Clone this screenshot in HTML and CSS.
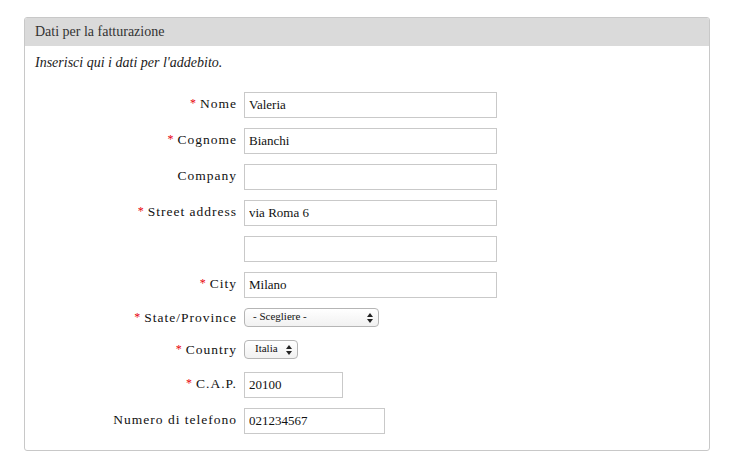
FILE: index.html
```html
<!DOCTYPE html>
<html lang="it">
<head>
<meta charset="utf-8">
<title>Dati per la fatturazione</title>
<link rel="stylesheet" href="styles.css">
</head>
<body>
<div class="panel">
  <div class="panel-head">Dati per la fatturazione</div>
  <div class="panel-body">
    <p class="intro">Inserisci qui i dati per l'addebito.</p>
    <form class="form">
      <label class="lbl"><span class="req">*</span> Nome</label>
      <div class="field"><input class="txt" type="text" value="Valeria"></div>

      <label class="lbl"><span class="req">*</span> Cognome</label>
      <div class="field"><input class="txt" type="text" value="Bianchi"></div>

      <label class="lbl">Company</label>
      <div class="field"><input class="txt" type="text" value=""></div>

      <label class="lbl"><span class="req">*</span> Street address</label>
      <div class="field"><input class="txt" type="text" value="via Roma 6"></div>

      <label class="lbl"></label>
      <div class="field"><input class="txt" type="text" value=""></div>

      <label class="lbl"><span class="req">*</span> City</label>
      <div class="field"><input class="txt" type="text" value="Milano"></div>

      <label class="lbl lbl-sel"><span class="req">*</span> State/Province</label>
      <div class="field field-sel">
        <div class="sel sel-wide">
          <span class="sel-text">- Scegliere -</span>
          <svg class="arrows" width="6" height="10" viewBox="0 0 6 10"><path d="M3 0L6 4H0Z M3 10L0 6H6Z" fill="#222"/></svg>
        </div>
      </div>

      <label class="lbl lbl-sel"><span class="req">*</span> Country</label>
      <div class="field field-sel">
        <div class="sel sel-narrow">
          <span class="sel-text">Italia</span>
          <svg class="arrows" width="6" height="10" viewBox="0 0 6 10"><path d="M3 0L6 4H0Z M3 10L0 6H6Z" fill="#222"/></svg>
        </div>
      </div>

      <label class="lbl"><span class="req">*</span> C.A.P.</label>
      <div class="field"><input class="txt txt-cap" type="text" value="20100"></div>

      <label class="lbl">Numero di telefono</label>
      <div class="field"><input class="txt txt-tel" type="text" value="021234567"></div>
    </form>
  </div>
</div>
</body>
</html>
```

FILE: styles.css
```css
html, body {
  margin: 0;
  padding: 0;
  background: #ffffff;
}
body {
  font-family: "Liberation Serif", "DejaVu Serif", serif;
  color: #222;
  padding: 17px 31px 0 24px;
}
.panel {
  width: 684px;
  height: 432px;
  border: 1px solid #c8c8c8;
  border-radius: 3px;
  overflow: hidden;
}
.panel-head {
  background: #dadada;
  height: 28px;
  line-height: 28px;
  padding-left: 10px;
  font-size: 14px;
  color: #333;
}
.intro {
  margin: 0;
  padding: 9px 0 0 10px;
  height: 21px;
  line-height: 16px;
  font-style: italic;
  font-size: 14px;
  color: #1a1a1a;
}
.form {
  display: grid;
  grid-template-columns: 212px 1fr;
  column-gap: 7px;
  row-gap: 10px;
  margin-top: 16px;
}
.lbl {
  display: flex;
  align-items: center;
  justify-content: flex-end;
  font-size: 13.5px;
  letter-spacing: 1px;
  color: #111;
  height: 26px;
  box-sizing: border-box;
  padding-bottom: 3px;
}
.lbl-sel {
  height: 22px;
  align-items: flex-start;
  padding-top: 2px;
  padding-bottom: 0;
}
.req {
  color: #e8000b;
  margin-right: 3px;
  font-size: 12px;
}
.field {
  display: flex;
  align-items: flex-start;
}
.field-sel {
  height: 22px;
}
.txt {
  box-sizing: border-box;
  width: 253px;
  height: 26px;
  border: 1px solid #c9c9c9;
  padding: 0 4px;
  margin: 0;
  font-family: "Liberation Serif", "DejaVu Serif", serif;
  font-size: 13px;
  color: #111;
  background: #fff;
  outline: none;
}
.txt-cap { width: 99px; }
.txt-tel { width: 141px; }
.sel {
  box-sizing: border-box;
  height: 19px;
  border: 1px solid #b5b5b5;
  border-radius: 4px;
  background: linear-gradient(#ffffff, #f1f1f1);
  display: flex;
  align-items: center;
  justify-content: space-between;
  padding: 0 5px 0 8px;
  font-size: 11px;
  color: #111;
}
.sel-text {
  line-height: 14px;
  margin-top: -3px;
}
.sel-wide { width: 135px; }
.sel-narrow { width: 54px; padding-left: 10px; }
.arrows { display: block; }
```
